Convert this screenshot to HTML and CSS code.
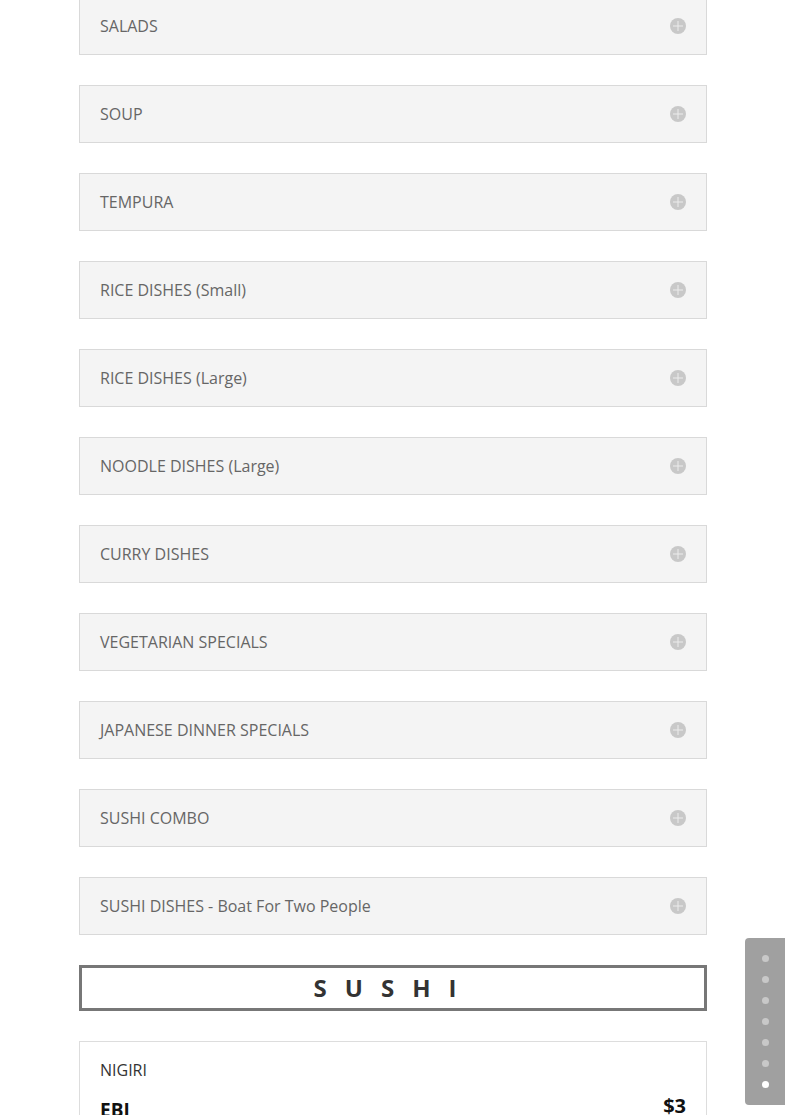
FILE: index.html
```html
<!DOCTYPE html>
<html>
<head>
<meta charset="utf-8">
<link rel="stylesheet" href="styles.css">
</head>
<body>
<div class="menu">
  <div class="toggle"><h5>SALADS</h5><span class="icon"></span></div>
  <div class="toggle"><h5>SOUP</h5><span class="icon"></span></div>
  <div class="toggle"><h5>TEMPURA</h5><span class="icon"></span></div>
  <div class="toggle"><h5>RICE DISHES (Small)</h5><span class="icon"></span></div>
  <div class="toggle"><h5>RICE DISHES (Large)</h5><span class="icon"></span></div>
  <div class="toggle"><h5>NOODLE DISHES (Large)</h5><span class="icon"></span></div>
  <div class="toggle"><h5>CURRY DISHES</h5><span class="icon"></span></div>
  <div class="toggle"><h5>VEGETARIAN SPECIALS</h5><span class="icon"></span></div>
  <div class="toggle"><h5>JAPANESE DINNER SPECIALS</h5><span class="icon"></span></div>
  <div class="toggle"><h5>SUSHI COMBO</h5><span class="icon"></span></div>
  <div class="toggle"><h5>SUSHI DISHES - Boat For Two People</h5><span class="icon"></span></div>
  <div class="heading"><h2>SUSHI</h2></div>
  <div class="card">
    <div class="card-title">NIGIRI</div>
    <div class="item"><span class="name">EBI</span><span class="price">$3</span></div>
  </div>
</div>
<nav class="sidenav">
  <span class="dot"></span>
  <span class="dot"></span>
  <span class="dot"></span>
  <span class="dot"></span>
  <span class="dot"></span>
  <span class="dot"></span>
  <span class="dot active"></span>
</nav>
</body>
</html>
```
FILE: styles.css
```css
html, body {
  margin: 0;
  padding: 0;
  background: #fff;
  overflow: hidden;
}
body {
  font-family: "Open Sans", "Liberation Sans", sans-serif;
  height: 1115px;
}
.menu {
  width: 628px;
  margin: -3px 0 0 79px;
  display: flex;
  flex-direction: column;
  gap: 30px;
}
.toggle {
  background: #f4f4f4;
  border: 1px solid #d9d9d9;
  padding: 20px;
  display: flex;
  align-items: center;
  justify-content: space-between;
}
.toggle h5 {
  margin: 0;
  font-size: 16px;
  line-height: 16px;
  font-weight: 400;
  color: #666;
}
.icon {
  width: 16px;
  height: 16px;
  border-radius: 50%;
  background: #c8c8c8;
  position: relative;
}
.icon::before, .icon::after {
  content: "";
  position: absolute;
  background: #ececec;
  left: 50%;
  top: 50%;
  transform: translate(-50%, -50%);
}
.icon::before { width: 10px; height: 1px; }
.icon::after { width: 1px; height: 10px; }
.heading {
  border: 3px solid #777;
  height: 40px;
  display: flex;
  align-items: center;
  justify-content: center;
}
.heading h2 {
  margin: 0;
  font-size: 24px;
  line-height: 24px;
  font-weight: 700;
  color: #333;
  letter-spacing: 18px;
  padding-left: 2px;
}
.card {
  border: 1px solid #ddd;
  padding: 17px 20px 0;
}
.card-title {
  font-size: 16px;
  line-height: 22px;
  color: #333;
  font-weight: 400;
}
.item {
  display: flex;
  justify-content: space-between;
  margin-top: 14px;
  color: #111;
}
.item .name {
  font-family: "Liberation Sans Narrow", "Open Sans", sans-serif;
  font-weight: 700;
  font-size: 19px;
  line-height: 22px;
  padding-top: 4px;
}
.item .price {
  font-family: "Liberation Sans Narrow", "Open Sans", sans-serif;
  font-weight: 700;
  font-size: 20px;
  line-height: 22px;
}
.sidenav {
  position: fixed;
  right: 0;
  top: 938px;
  width: 40px;
  height: 167px;
  background: #a0a0a0;
  border-radius: 4px 0 0 4px;
  display: flex;
  flex-direction: column;
  align-items: center;
  padding-top: 17px;
  box-sizing: border-box;
  gap: 14px;
}
.dot {
  width: 7px;
  height: 7px;
  border-radius: 50%;
  background: #c8c8c8;
}
.dot.active {
  background: #fff;
}
```
